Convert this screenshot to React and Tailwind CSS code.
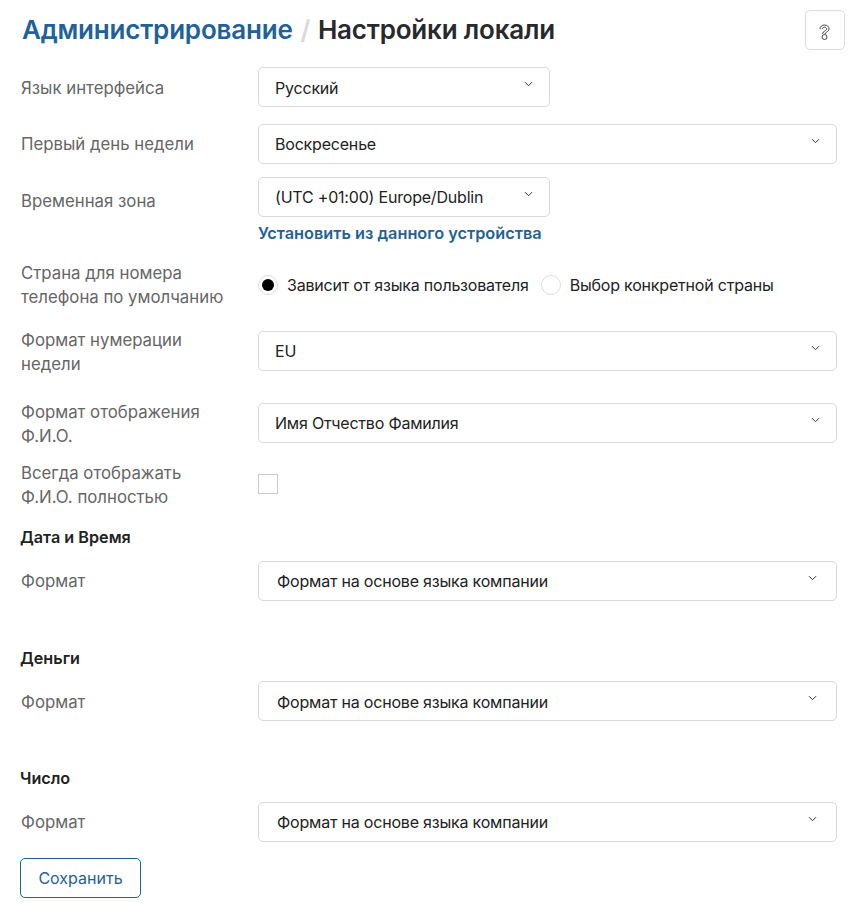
import React from "react";

const Chevron = ({ color = "#333" }) => (
  <svg width="9" height="6" viewBox="0 0 9 6" fill="none" className="shrink-0">
    <path d="M1 1.200l3.500 3.500 3.500-3.500" stroke={color} strokeWidth="1" />
  </svg>
);

const Select = ({ children, narrow, offset, low }) => (
  <div className={`flex h-10 items-center justify-between rounded-[5px] border border-[#d9d9d9] bg-white ${narrow ? "w-[292px]" : "w-[579px]"} ${offset ? "pl-[18px] pr-[19px]" : "pl-[16px] pr-[16px]"}`}>
    <span className={`text-[16px] leading-5 tracking-[-0.2px] text-[#222] ${low ? "pt-px" : ""}`}>{children}</span>
    <span className="relative -top-[3px]"><Chevron /></span>
  </div>
);

const Label = ({ children, low }) => (
  <div className={`w-[238px] shrink-0 pl-[1px] text-[16.8px] leading-6 text-[#666] ${low ? "pt-px" : ""}`}>{children}</div>
);

const Heading = ({ children, className }) => (
  <div className={`text-[16.2px] font-semibold leading-5 text-[#222] ${className}`}>{children}</div>
);

const FormatRow = ({ className, low }) => (
  <div className={`flex h-10 items-center ${className}`}>
    <Label low={low}>Формат</Label>
    <Select offset low={low}>Формат на основе языка компании</Select>
  </div>
);

export default function App() {
  return (
    <div className="h-[906px] w-[848px] overflow-hidden bg-white pl-5 font-['Inter',sans-serif]">
      <div className="flex h-[67px] items-start justify-between pr-[3px] pt-[10px]">
        <h1 className="pl-[2px] pt-[2px] text-[26px] font-semibold leading-9 tracking-[-0.2px]">
          <span className="text-[#1f6199]">Администрирование</span>
          <span className="mx-[1.5px] text-[#d9d9d9]"> / </span>
          <span className="text-[#27292c]">Настройки локали</span>
        </h1>
        <button className="flex h-10 w-10 items-center justify-center rounded-[5px] border border-[#dcdcdc] bg-white">
          <svg width="11" height="17" viewBox="0 0 11 17" fill="none" stroke="#444" strokeWidth="1" className="relative top-[2px] -left-px">
            <path d="M1 5C1 2.600 3 1 5.500 1S10 2.600 10 4.800c0 1.700-1.200 2.600-2.400 3.300-1 .6-1.600 1.100-1.700 2" />
            <path d="M3.300 5.200C3.300 4 4.300 3.200 5.500 3.200s2.200.8 2.200 1.700c0 .9-.8 1.400-1.800 2-1.200.7-2.200 1.500-2.300 3.100" />
            <circle cx="5.500" cy="13" r="2.500" />
          </svg>
        </button>
      </div>

      <div className="flex h-10 items-center">
        <Label low>Язык интерфейса</Label>
        <Select narrow low>Русский</Select>
      </div>

      <div className="mt-[17px] flex h-10 items-center">
        <Label>Первый день недели</Label>
        <Select>Воскресенье</Select>
      </div>

      <div className="mt-[13px] flex">
        <div className="flex h-12 items-center"><Label>Временная зона</Label></div>
        <div>
          <Select narrow>(UTC +01:00) Europe/Dublin</Select>
          <div className="mt-[6px] text-[16.3px] font-semibold leading-5 text-[#1f6199]">Установить из данного устройства</div>
        </div>
      </div>

      <div className="mt-[18px] flex h-12 items-center">
        <Label>Страна для номера<br />телефона по умолчанию</Label>
        <div className="flex items-center text-[16px] leading-5 tracking-[-0.2px] text-[#222]">
          <span className="flex h-5 w-5 items-center justify-center rounded-full border border-[#dcdcdc]">
            <span className="h-3 w-3 rounded-full bg-black" />
          </span>
          <span className="ml-[9px]">Зависит от языка пользователя</span>
          <span className="ml-[12px] h-5 w-5 rounded-full border border-[#dcdcdc]" />
          <span className="ml-[9px]">Выбор конкретной страны</span>
        </div>
      </div>

      <div className="mt-[22px] flex h-10 items-center">
        <Label low>Формат нумерации<br />недели</Label>
        <Select>EU</Select>
      </div>

      <div className="mt-8 flex h-10 items-center">
        <Label low>Формат отображения<br />Ф.И.О.</Label>
        <Select>Имя Отчество Фамилия</Select>
      </div>

      <div className="mt-[17px] flex h-12 items-center">
        <Label low>Всегда отображать<br />Ф.И.О. полностью</Label>
        <span className="h-5 w-5 border border-[#c9c9c9] bg-white" />
      </div>

      <Heading className="mt-[19px]">Дата и Время</Heading>
      <FormatRow className="mt-[14px]" />
      <Heading className="mt-[47px]">Деньги</Heading>
      <FormatRow className="mt-[13px]" low />
      <Heading className="mt-[47px]">Число</Heading>
      <FormatRow className="mt-[14px]" />

      <button className="mt-4 flex h-10 w-[121px] items-center justify-center rounded-[5px] border border-[#1f6199] bg-white text-[16px] leading-5 text-[#1f6199]">
        Сохранить
      </button>
    </div>
  );
}
